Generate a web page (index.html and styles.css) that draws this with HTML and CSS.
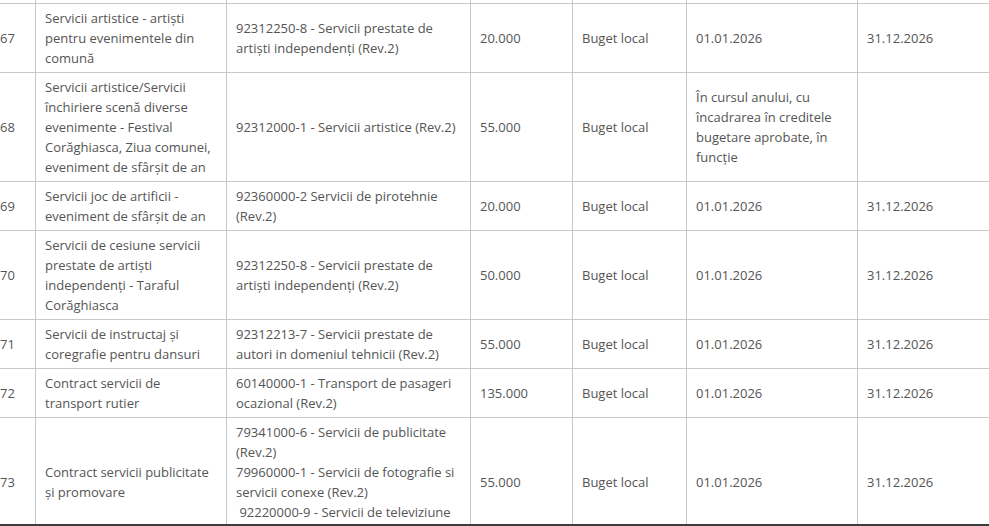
FILE: index.html
```html
<!DOCTYPE html>
<html lang="ro">
<head>
<meta charset="utf-8">
<title>Program achiziții</title>
<link rel="stylesheet" href="styles.css">
</head>
<body>
<div class="frame">
<table class="plan">
<colgroup>
<col class="c-nr"><col class="c-obj"><col class="c-cpv"><col class="c-val"><col class="c-src"><col class="c-start"><col class="c-end">
</colgroup>
<tbody>
<tr class="prev"><td></td><td></td><td></td><td></td><td></td><td></td><td></td></tr>
<tr>
<td>67</td>
<td>Servicii artistice - artiști pentru evenimentele din comună</td>
<td>92312250-8 - Servicii prestate de artiști independenți (Rev.2)</td>
<td>20.000</td>
<td>Buget local</td>
<td>01.01.2026</td>
<td>31.12.2026</td>
</tr>
<tr>
<td>68</td>
<td>Servicii artistice/Servicii închiriere scenă diverse evenimente - Festival Corăghiasca, Ziua comunei, eveniment de sfârșit de an</td>
<td>92312000-1 - Servicii artistice (Rev.2)</td>
<td>55.000</td>
<td>Buget local</td>
<td>În cursul anului, cu încadrarea în creditele bugetare aprobate, în funcție</td>
<td></td>
</tr>
<tr>
<td>69</td>
<td>Servicii joc de artificii - eveniment de sfârșit de an</td>
<td>92360000-2 Servicii de pirotehnie (Rev.2)</td>
<td>20.000</td>
<td>Buget local</td>
<td>01.01.2026</td>
<td>31.12.2026</td>
</tr>
<tr>
<td>70</td>
<td>Servicii de cesiune servicii prestate de artiști independenți - Taraful Corăghiasca</td>
<td>92312250-8 - Servicii prestate de artiști independenți (Rev.2)</td>
<td>50.000</td>
<td>Buget local</td>
<td>01.01.2026</td>
<td>31.12.2026</td>
</tr>
<tr>
<td>71</td>
<td>Servicii de instructaj și coregrafie pentru dansuri</td>
<td>92312213-7 - Servicii prestate de autori in domeniul tehnicii (Rev.2)</td>
<td>55.000</td>
<td>Buget local</td>
<td>01.01.2026</td>
<td>31.12.2026</td>
</tr>
<tr>
<td>72</td>
<td>Contract servicii de transport rutier</td>
<td>60140000-1 - Transport de pasageri ocazional (Rev.2)</td>
<td>135.000</td>
<td>Buget local</td>
<td>01.01.2026</td>
<td>31.12.2026</td>
</tr>
<tr>
<td>73</td>
<td>Contract servicii publicitate și promovare</td>
<td>79341000-6 - Servicii de publicitate (Rev.2)<br>79960000-1 - Servicii de fotografie si servicii conexe (Rev.2)<br>&nbsp;92220000-9 - Servicii de televiziune (Rev.2)</td>
<td>55.000</td>
<td>Buget local</td>
<td>01.01.2026</td>
<td>31.12.2026</td>
</tr>
</tbody>
</table>
</div>
</body>
</html>
```
FILE: styles.css
```css
html, body {
  margin: 0;
  padding: 0;
  overflow: hidden;
  background: #fff;
}

.frame {
  height: 524px;
  overflow: hidden;
  border-bottom: 2px solid #3c3c3c;
}

.plan {
  border-collapse: collapse;
  table-layout: fixed;
  width: 1160px;
  margin-top: -18px;
  margin-left: -10px;
  font-family: "Open Sans", "Noto Sans", sans-serif;
  font-size: 13px;
  line-height: 20px;
  color: #555;
}

.c-nr { width: 45px; }
.c-obj { width: 191px; }
.c-cpv { width: 244px; }
.c-val { width: 102px; }
.c-src { width: 114px; }
.c-start { width: 171px; }
.c-end { width: 293px; }

.plan td {
  border: 1px solid #c8c8c8;
  padding: 4px 9px;
  vertical-align: middle;
  text-align: left;
}

.plan .prev td {
  height: 12px;
}
```
